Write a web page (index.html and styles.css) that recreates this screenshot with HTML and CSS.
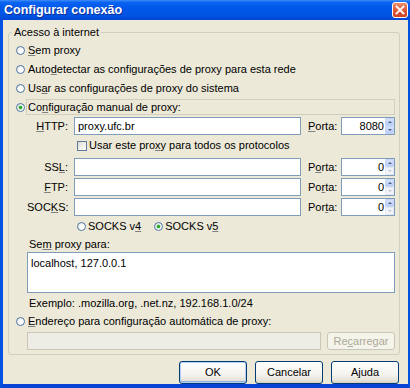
FILE: index.html
```html
<!DOCTYPE html>
<html lang="pt">
<head>
  <meta charset="UTF-8">
  <title>Configurar conexão</title>
  <link rel="stylesheet" href="styles.css">
</head>
<body>
  <div class="window">
    <!-- Barra de título -->
    <div class="titlebar">
      <span class="title">Configurar conexão</span>
      <span class="close">
        <svg width="16" height="16" viewBox="0 0 16 16">
          <defs>
            <linearGradient id="cg" x1="0" y1="0" x2="0" y2="1">
              <stop offset="0" stop-color="#ED8F6E"/>
              <stop offset="0.5" stop-color="#DE5C3A"/>
              <stop offset="1" stop-color="#C7401C"/>
            </linearGradient>
          </defs>
          <rect x="0.5" y="0.5" width="15" height="15" rx="2.5" fill="url(#cg)" stroke="#fff"/>
          <path d="M4.5 4.5 L11.5 11.5 M11.5 4.5 L4.5 11.5" stroke="#fff" stroke-width="1.8" stroke-linecap="square"/>
        </svg>
      </span>
    </div>

    <div class="client">
      <fieldset class="group">
        <legend>Acesso à internet</legend>

        <div class="opt"><span class="radio"></span><span><u>S</u>em proxy</span></div>
        <div class="opt"><span class="radio"></span><span>Auto<u>d</u>etectar as configurações de proxy para esta rede</span></div>
        <div class="opt"><span class="radio"></span><span>Us<u>a</u>r as configurações de proxy do sistema</span></div>
        <div class="opt manual"><span class="radio checked"></span><span class="manual-box"><span>Co<u>n</u>figuração manual de proxy:</span></span></div>

        <!-- Servidores -->
        <div class="proxy-row">
          <span class="plabel"><u>H</u>TTP:</span>
          <span class="field host">proxy.ufc.br</span>
          <span class="portlabel"><u>P</u>orta:</span>
          <span class="field port"><span class="port-value">8080</span><span class="spin"><span class="spin-up"></span><span class="spin-down"></span></span></span>
        </div>
        <div class="check-row"><span class="checkbox"></span><span>Usar este pro<u>x</u>y para todos os protocolos</span></div>
        <div class="proxy-row">
          <span class="plabel">SS<u>L</u>:</span>
          <span class="field host"></span>
          <span class="portlabel">P<u>o</u>rta:</span>
          <span class="field port"><span class="port-value">0</span><span class="spin"><span class="spin-up"></span><span class="spin-down off"></span></span></span>
        </div>
        <div class="proxy-row">
          <span class="plabel"><u>F</u>TP:</span>
          <span class="field host"></span>
          <span class="portlabel">Po<u>r</u>ta:</span>
          <span class="field port"><span class="port-value">0</span><span class="spin"><span class="spin-up"></span><span class="spin-down off"></span></span></span>
        </div>
        <div class="proxy-row">
          <span class="plabel">SOC<u>K</u>S:</span>
          <span class="field host"></span>
          <span class="portlabel">Por<u>t</u>a:</span>
          <span class="field port"><span class="port-value">0</span><span class="spin"><span class="spin-up"></span><span class="spin-down off"></span></span></span>
        </div>

        <div class="socks-row">
          <span class="socks-opt"><span class="radio"></span><span>SOCKS v<u>4</u></span></span>
          <span class="socks-opt"><span class="radio checked"></span><span>SOCKS v<u>5</u></span></span>
        </div>

        <div class="noproxy-label"><span>Se<u>m</u> proxy para:</span></div>
        <div class="noproxy">localhost, 127.0.0.1</div>
        <div class="example"><span>Exemplo: .mozilla.org, .net.nz, 192.168.1.0/24</span></div>

        <div class="opt auto"><span class="radio"></span><span><u>E</u>ndereço para configuração automática de proxy:</span></div>
        <div class="auto-row">
          <span class="field disabled"></span>
          <span class="btn off"><span>Re<u>c</u>arregar</span></span>
        </div>
      </fieldset>

      <div class="buttons">
        <span class="btn default">OK</span>
        <span class="btn">Cancelar</span>
        <span class="btn"><span>A<u>j</u>uda</span></span>
      </div>
    </div>
  </div>
</body>
</html>
```

FILE: styles.css
```css
/* Reset base */
* {
  box-sizing: border-box;
  margin: 0;
  padding: 0;
}
body {
  width: 410px;
  height: 388px;
  overflow: hidden;
  font-family: "Liberation Sans", Arial, sans-serif;
  font-size: 11px;
  line-height: 13px;
  color: #000;
  background: #ECE9D8;
}
u {
  text-decoration: underline;
  text-decoration-color: #808080;
  text-underline-offset: 1px;
}
.window {
  display: flex;
  flex-direction: column;
  height: 388px;
}
/* Barra de título estilo Luna */
.titlebar {
  height: 21px;
  display: flex;
  align-items: center;
  justify-content: space-between;
  padding: 0 2px 0 4px;
  background: linear-gradient(#3C8CF8 0%, #0A63F2 12%, #0058EA 40%, #0054E3 75%, #0047D2 100%);
  color: #fff;
}
.title {
  font-weight: bold;
  font-size: 12.5px;
  text-shadow: 1px 1px 0 #0F2E9A;
}
.close {
  display: flex;
  width: 16px;
  height: 16px;
}
.client {
  flex: 1;
  display: flex;
  flex-direction: column;
  border-left: 3px solid #0052E0;
  border-right: 2px solid #0052E0;
  border-bottom: 4px solid #0845D4;
}
/* Groupbox */
.group {
  margin: 6px 8px 0 5px;
  border: 1px solid #D0D0BF;
  border-radius: 3px;
  padding: 2px 4px 4px 7px;
}
.group legend {
  padding: 0 2px;
  margin-left: -4px;
  line-height: 13px;
}
.opt {
  height: 19px;
  display: flex;
  align-items: center;
  gap: 3px;
}
.radio {
  width: 9px;
  height: 9px;
  flex: none;
  border-radius: 50%;
  border: 1px solid #4F75A6;
  background: radial-gradient(circle at 65% 65%, #FFFFFF 30%, #DCDCD6 100%);
  position: relative;
}
.radio.checked::after {
  content: "";
  position: absolute;
  left: 2px;
  top: 2px;
  width: 3px;
  height: 3px;
  border-radius: 50%;
  background: #2CA82C;
  box-shadow: 0 0 0 0.5px #5BC45B;
}
.manual {
  height: 16px;
  margin-top: 1px;
  gap: 1px;
}
.manual-box {
  flex: 1;
  height: 16px;
  display: flex;
  align-items: center;
  padding-left: 1px;
  border: 1px solid #D0D0BF;
}
/* Linhas dos servidores */
.proxy-row {
  display: flex;
  align-items: center;
  height: 18px;
  margin-top: 2px;
  padding-left: 11px;
}
.plabel {
  width: 41px;
  margin-right: 6px;
  text-align: right;
}
.field {
  height: 18px;
  border: 1px solid #7F9DB9;
  background: #fff;
  display: flex;
  align-items: center;
  padding-left: 3px;
}
.host {
  width: 227px;
}
.portlabel {
  width: 33px;
  margin-left: 7px;
}
.port {
  width: 54px;
  justify-content: flex-end;
  padding: 0;
}
.port-value {
  padding-right: 1px;
}
.spin {
  width: 9px;
  height: 16px;
  display: flex;
  flex-direction: column;
}
.spin-up,
.spin-down {
  flex: 1;
  position: relative;
  background: linear-gradient(#D6E2FB, #B9CDF6);
  border: 1px solid #C3D3F5;
  border-radius: 1px;
}
.spin-up::after,
.spin-down::after {
  content: "";
  position: absolute;
  left: 2px;
  top: 2px;
  border-left: 2px solid transparent;
  border-right: 2px solid transparent;
}
.spin-up::after {
  border-bottom: 2px solid #4D6185;
}
.spin-down::after {
  border-top: 2px solid #4D6185;
}
.spin-down.off {
  background: #F1F3F8;
  border-color: #E4E8F0;
}
.spin-down.off::after {
  border-top-color: #C5C8D2;
}
.check-row {
  height: 21px;
  display: flex;
  align-items: center;
  gap: 2px;
  padding-left: 61px;
}
.checkbox {
  width: 10px;
  height: 10px;
  border: 1px solid #5D7A9C;
  background: linear-gradient(135deg, #DCDCD6, #FFFFFF);
}
.socks-row {
  height: 21px;
  display: flex;
  align-items: center;
  gap: 13px;
  padding-left: 61px;
}
.socks-opt {
  display: flex;
  align-items: center;
  gap: 2px;
}
.noproxy-label {
  height: 15px;
  display: flex;
  align-items: center;
  padding-left: 13px;
}
.noproxy {
  height: 41px;
  margin-left: 11px;
  border: 1px solid #7F9DB9;
  background: #fff;
  padding: 4px 3px;
}
.example {
  height: 20px;
  display: flex;
  align-items: center;
  padding-left: 13px;
}
.auto {
  height: 17px;
}
.auto-row {
  display: flex;
  height: 18px;
  margin-top: 2px;
  margin-left: 11px;
  gap: 6px;
}
.field.disabled {
  width: 294px;
  background: #EEEDE5;
  border-color: #C9C7BA;
}
/* Botões */
.btn {
  width: 68px;
  height: 23px;
  display: flex;
  align-items: center;
  justify-content: center;
  border: 1px solid #003C74;
  border-radius: 3px;
  background: linear-gradient(#FFFFFF 0%, #F4F3EE 60%, #E3E0D5 90%, #D6D0C5 100%);
}
.btn.default {
  box-shadow: inset 0 0 0 1px #B8D0F4, inset 0 -1px 0 1px #89ADE4;
}
.btn.off {
  height: 18px;
  border-color: #C9C7BA;
  background: #F5F4EA;
  color: #ACA899;
}
.btn.off u {
  text-decoration-color: #ACA899;
}
.buttons {
  display: flex;
  justify-content: flex-end;
  gap: 8px;
  margin-top: 6px;
  padding-right: 9px;
}
```
